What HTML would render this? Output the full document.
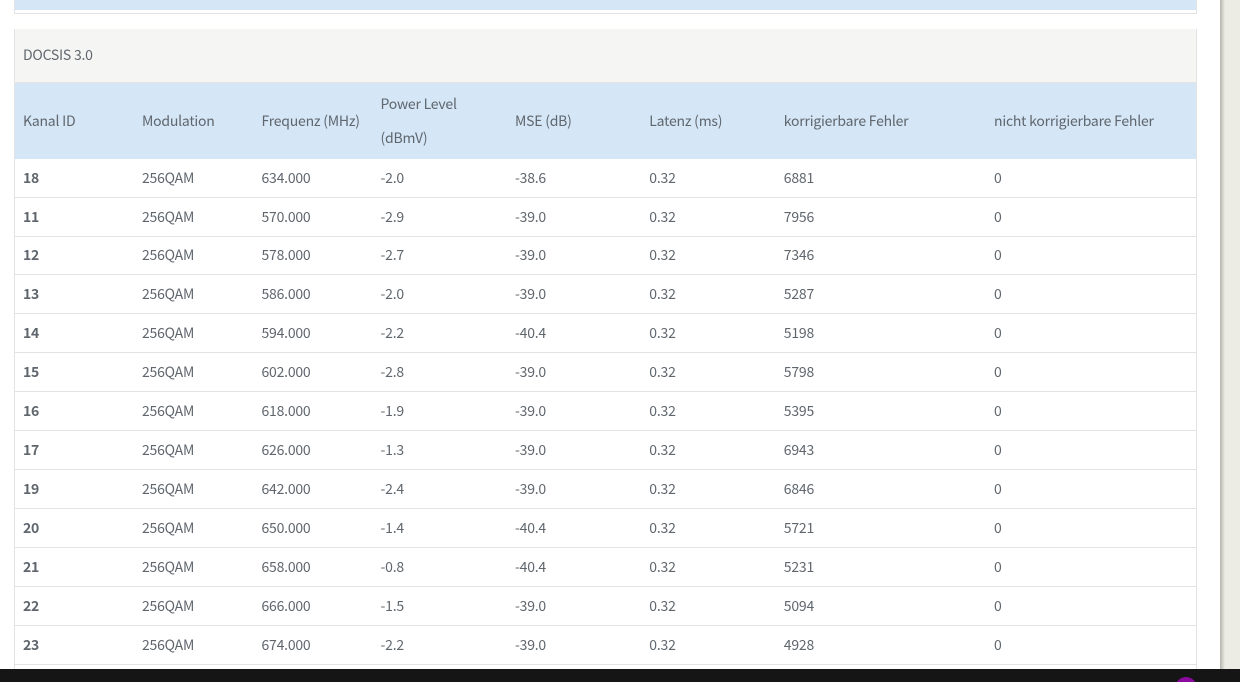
<!DOCTYPE html>
<html><head><meta charset="utf-8">
<style>
html,body{margin:0;padding:0;width:1240px;height:682px;overflow:hidden;background:#fff}
body{position:relative;font-family:"Noto Sans CJK SC","Liberation Sans",sans-serif;font-size:14px;color:#5f666d}
.a{position:absolute}
.t{position:absolute;white-space:nowrap;line-height:20px;height:20px;letter-spacing:-.22px}
.l{position:absolute;left:15px;width:1181px;height:1px;background:#e3e3e3}
b{font-weight:700}
</style></head><body>
<div class="a" style="left:1220px;top:0;width:20px;height:682px;background:#ecece4"></div>
<div class="a" style="left:1220px;top:0;width:5px;height:682px;background:linear-gradient(90deg,#b5b5ae,#ecece4)"></div>
<div class="a" style="left:14px;top:0;width:1px;height:14px;background:#e3e3e3"></div>
<div class="a" style="left:1196px;top:0;width:1px;height:14px;background:#e3e3e3"></div>
<div class="a" style="left:15px;top:0;width:1181px;height:10px;background:#d5e6f6"></div>
<div class="a" style="left:14px;top:13px;width:1183px;height:1px;background:#e3e3e3"></div>
<div class="a" style="left:14px;top:29px;width:1px;height:640px;background:#e3e3e3"></div>
<div class="a" style="left:1196px;top:29px;width:1px;height:640px;background:#e3e3e3"></div>
<div class="a" style="left:15px;top:29px;width:1181px;height:53px;background:#f5f5f3"></div>
<div class="a" style="left:15px;top:82px;width:1181px;height:1px;background:#e3e3e3"></div>
<div class="a" style="left:15px;top:83px;width:1181px;height:76px;background:#d5e6f6"></div>
<div class="t" style="left:23px;top:45px">DOCSIS 3.0</div>
<div class="t" style="left:23px;top:111px">Kanal ID</div>
<div class="t" style="left:142px;top:111px">Modulation</div>
<div class="t" style="left:261.500px;top:111px">Frequenz (MHz)</div>
<div class="t" style="left:380.500px;top:94px">Power Level</div>
<div class="t" style="left:380.500px;top:128px">(dBmV)</div>
<div class="t" style="left:515px;top:111px">MSE (dB)</div>
<div class="t" style="left:649.300px;top:111px">Latenz (ms)</div>
<div class="t" style="left:783.800px;top:111px">korrigierbare Fehler</div>
<div class="t" style="left:994px;top:111px">nicht korrigierbare Fehler</div>
<div class="l" style="top:197px"></div>
<div class="t" style="left:23px;top:168px"><b>18</b></div><div class="t" style="left:142px;top:168px">256QAM</div><div class="t" style="left:261.500px;top:168px">634.000</div><div class="t" style="left:380.500px;top:168px">-2.0</div><div class="t" style="left:515px;top:168px">-38.6</div><div class="t" style="left:649.300px;top:168px">0.32</div><div class="t" style="left:783.800px;top:168px">6881</div><div class="t" style="left:994px;top:168px">0</div>
<div class="l" style="top:236px"></div>
<div class="t" style="left:23px;top:207px"><b>11</b></div><div class="t" style="left:142px;top:207px">256QAM</div><div class="t" style="left:261.500px;top:207px">570.000</div><div class="t" style="left:380.500px;top:207px">-2.9</div><div class="t" style="left:515px;top:207px">-39.0</div><div class="t" style="left:649.300px;top:207px">0.32</div><div class="t" style="left:783.800px;top:207px">7956</div><div class="t" style="left:994px;top:207px">0</div>
<div class="l" style="top:274px"></div>
<div class="t" style="left:23px;top:245px"><b>12</b></div><div class="t" style="left:142px;top:245px">256QAM</div><div class="t" style="left:261.500px;top:245px">578.000</div><div class="t" style="left:380.500px;top:245px">-2.7</div><div class="t" style="left:515px;top:245px">-39.0</div><div class="t" style="left:649.300px;top:245px">0.32</div><div class="t" style="left:783.800px;top:245px">7346</div><div class="t" style="left:994px;top:245px">0</div>
<div class="l" style="top:313px"></div>
<div class="t" style="left:23px;top:284px"><b>13</b></div><div class="t" style="left:142px;top:284px">256QAM</div><div class="t" style="left:261.500px;top:284px">586.000</div><div class="t" style="left:380.500px;top:284px">-2.0</div><div class="t" style="left:515px;top:284px">-39.0</div><div class="t" style="left:649.300px;top:284px">0.32</div><div class="t" style="left:783.800px;top:284px">5287</div><div class="t" style="left:994px;top:284px">0</div>
<div class="l" style="top:352px"></div>
<div class="t" style="left:23px;top:323px"><b>14</b></div><div class="t" style="left:142px;top:323px">256QAM</div><div class="t" style="left:261.500px;top:323px">594.000</div><div class="t" style="left:380.500px;top:323px">-2.2</div><div class="t" style="left:515px;top:323px">-40.4</div><div class="t" style="left:649.300px;top:323px">0.32</div><div class="t" style="left:783.800px;top:323px">5198</div><div class="t" style="left:994px;top:323px">0</div>
<div class="l" style="top:391px"></div>
<div class="t" style="left:23px;top:362px"><b>15</b></div><div class="t" style="left:142px;top:362px">256QAM</div><div class="t" style="left:261.500px;top:362px">602.000</div><div class="t" style="left:380.500px;top:362px">-2.8</div><div class="t" style="left:515px;top:362px">-39.0</div><div class="t" style="left:649.300px;top:362px">0.32</div><div class="t" style="left:783.800px;top:362px">5798</div><div class="t" style="left:994px;top:362px">0</div>
<div class="l" style="top:430px"></div>
<div class="t" style="left:23px;top:401px"><b>16</b></div><div class="t" style="left:142px;top:401px">256QAM</div><div class="t" style="left:261.500px;top:401px">618.000</div><div class="t" style="left:380.500px;top:401px">-1.9</div><div class="t" style="left:515px;top:401px">-39.0</div><div class="t" style="left:649.300px;top:401px">0.32</div><div class="t" style="left:783.800px;top:401px">5395</div><div class="t" style="left:994px;top:401px">0</div>
<div class="l" style="top:469px"></div>
<div class="t" style="left:23px;top:440px"><b>17</b></div><div class="t" style="left:142px;top:440px">256QAM</div><div class="t" style="left:261.500px;top:440px">626.000</div><div class="t" style="left:380.500px;top:440px">-1.3</div><div class="t" style="left:515px;top:440px">-39.0</div><div class="t" style="left:649.300px;top:440px">0.32</div><div class="t" style="left:783.800px;top:440px">6943</div><div class="t" style="left:994px;top:440px">0</div>
<div class="l" style="top:508px"></div>
<div class="t" style="left:23px;top:479px"><b>19</b></div><div class="t" style="left:142px;top:479px">256QAM</div><div class="t" style="left:261.500px;top:479px">642.000</div><div class="t" style="left:380.500px;top:479px">-2.4</div><div class="t" style="left:515px;top:479px">-39.0</div><div class="t" style="left:649.300px;top:479px">0.32</div><div class="t" style="left:783.800px;top:479px">6846</div><div class="t" style="left:994px;top:479px">0</div>
<div class="l" style="top:547px"></div>
<div class="t" style="left:23px;top:518px"><b>20</b></div><div class="t" style="left:142px;top:518px">256QAM</div><div class="t" style="left:261.500px;top:518px">650.000</div><div class="t" style="left:380.500px;top:518px">-1.4</div><div class="t" style="left:515px;top:518px">-40.4</div><div class="t" style="left:649.300px;top:518px">0.32</div><div class="t" style="left:783.800px;top:518px">5721</div><div class="t" style="left:994px;top:518px">0</div>
<div class="l" style="top:586px"></div>
<div class="t" style="left:23px;top:557px"><b>21</b></div><div class="t" style="left:142px;top:557px">256QAM</div><div class="t" style="left:261.500px;top:557px">658.000</div><div class="t" style="left:380.500px;top:557px">-0.8</div><div class="t" style="left:515px;top:557px">-40.4</div><div class="t" style="left:649.300px;top:557px">0.32</div><div class="t" style="left:783.800px;top:557px">5231</div><div class="t" style="left:994px;top:557px">0</div>
<div class="l" style="top:625px"></div>
<div class="t" style="left:23px;top:596px"><b>22</b></div><div class="t" style="left:142px;top:596px">256QAM</div><div class="t" style="left:261.500px;top:596px">666.000</div><div class="t" style="left:380.500px;top:596px">-1.5</div><div class="t" style="left:515px;top:596px">-39.0</div><div class="t" style="left:649.300px;top:596px">0.32</div><div class="t" style="left:783.800px;top:596px">5094</div><div class="t" style="left:994px;top:596px">0</div>
<div class="l" style="top:664px"></div>
<div class="t" style="left:23px;top:635px"><b>23</b></div><div class="t" style="left:142px;top:635px">256QAM</div><div class="t" style="left:261.500px;top:635px">674.000</div><div class="t" style="left:380.500px;top:635px">-2.2</div><div class="t" style="left:515px;top:635px">-39.0</div><div class="t" style="left:649.300px;top:635px">0.32</div><div class="t" style="left:783.800px;top:635px">4928</div><div class="t" style="left:994px;top:635px">0</div>
<div class="a" style="left:0;top:669px;width:1240px;height:13px;background:#151515;overflow:hidden">
<div class="a" style="left:1175px;top:8px;width:22px;height:22px;border-radius:50%;background:#8a0a9e"></div>
</div>
</body></html>
